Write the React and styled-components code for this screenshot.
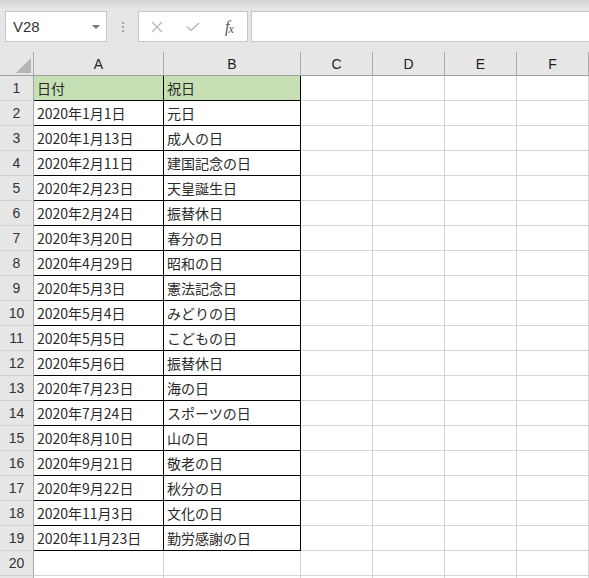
import styled, { createGlobalStyle } from "styled-components";

const GlobalStyle = createGlobalStyle`
  html, body {
    margin: 0;
    padding: 0;
    background: #ffffff;
    overflow: hidden;
  }
`;

const Page = styled.div`
  width: 589px;
  height: 578px;
  overflow: hidden;
  background: #ffffff;
`;

const TopBar = styled.div`
  height: 52px;
  box-sizing: border-box;
  padding: 11px 0 0 5px;
  display: flex;
  align-items: flex-start;
  background: linear-gradient(#d3d3d3 0px, #e6e6e6 9px, #e6e6e6 100%);
`;

const NameBox = styled.div`
  width: 102px;
  height: 31px;
  box-sizing: border-box;
  border: 1px solid #c6c6c6;
  background: #ffffff;
  display: flex;
  align-items: center;
  justify-content: space-between;
  padding: 0 6px 0 7px;
`;

const NameText = styled.span`
  font-family: "Liberation Sans", Arial, sans-serif;
  font-size: 15px;
  color: #333333;
`;

const DropArrow = styled.span`
  width: 0;
  height: 0;
  border-left: 4px solid transparent;
  border-right: 4px solid transparent;
  border-top: 4px solid #777777;
`;

const Grip = styled.div`
  width: 31px;
  height: 31px;
  display: flex;
  flex-direction: column;
  align-items: center;
  justify-content: center;
  gap: 2px;
  padding-left: 1px;
  box-sizing: border-box;

  span {
    width: 2px;
    height: 2px;
    background: #a3a3a3;
  }
`;

const FormulaButtons = styled.div`
  width: 110px;
  height: 31px;
  box-sizing: border-box;
  border: 1px solid #c6c6c6;
  background: #ffffff;
  display: flex;
  align-items: center;
`;

const ToolButton = styled.span`
  width: 36px;
  height: 29px;
  display: flex;
  align-items: center;
  justify-content: center;
`;

const Fx = styled.span`
  font-family: "Liberation Serif", "Times New Roman", serif;
  font-style: italic;
  font-size: 16px;
  color: #5a5a5a;
  letter-spacing: -1px;

  small {
    font-size: 12px;
    position: relative;
    top: 1px;
  }
`;

const FormulaInput = styled.div`
  flex: 1;
  height: 31px;
  margin-left: 3px;
  margin-right: -4px;
  box-sizing: border-box;
  border: 1px solid #c6c6c6;
  background: #ffffff;
`;

const Sheet = styled.div`
  display: grid;
  grid-template-columns: 34px 130px 137px 72px 72px 72px 72px 72px;
  grid-template-rows: 24px;
  grid-auto-rows: 25px;
  font-family: "Noto Sans CJK JP", "Noto Sans", sans-serif;
`;

const Corner = styled.div`
  position: relative;
  background: #e6e6e6;
  border-right: 1px solid #ababab;
  border-bottom: 1px solid #9e9e9e;

  &::after {
    content: "";
    position: absolute;
    right: 2px;
    bottom: 2px;
    width: 0;
    height: 0;
    border-left: 15px solid transparent;
    border-bottom: 15px solid #b5b5b5;
  }
`;

const ColHead = styled.div`
  background: #e6e6e6;
  border-right: 1px solid #ababab;
  border-bottom: 1px solid #9e9e9e;
  display: flex;
  align-items: center;
  justify-content: center;
  font-family: "Liberation Sans", Arial, sans-serif;
  font-size: 14px;
  color: #222222;
`;

const RowHead = styled.div`
  background: #e6e6e6;
  border-right: 1px solid #a6a6a6;
  border-bottom: 1px solid #d2d2d2;
  display: flex;
  align-items: center;
  justify-content: center;
  font-family: "Liberation Sans", Arial, sans-serif;
  font-size: 14px;
  color: #333333;
`;

const Cell = styled.div`
  background: ${(p) => (p.$fill ? "#c6e0b4" : "#ffffff")};
  border-right: 1px solid ${(p) => (p.$boxed ? "#000000" : "#d4d4d4")};
  border-bottom: 1px solid ${(p) => (p.$boxed ? "#000000" : "#d4d4d4")};
  display: flex;
  align-items: center;
  padding-left: 3px;
  font-size: 14px;
  line-height: 1;
  color: #2a2a2a;
  white-space: nowrap;
  overflow: hidden;
`;

// last column (G) sits just past the right edge of the window
const columns = ["A", "B", "C", "D", "E", "F", ""];

const holidays = [
  ["日付", "祝日"],
  ["2020年1月1日", "元日"],
  ["2020年1月13日", "成人の日"],
  ["2020年2月11日", "建国記念の日"],
  ["2020年2月23日", "天皇誕生日"],
  ["2020年2月24日", "振替休日"],
  ["2020年3月20日", "春分の日"],
  ["2020年4月29日", "昭和の日"],
  ["2020年5月3日", "憲法記念日"],
  ["2020年5月4日", "みどりの日"],
  ["2020年5月5日", "こどもの日"],
  ["2020年5月6日", "振替休日"],
  ["2020年7月23日", "海の日"],
  ["2020年7月24日", "スポーツの日"],
  ["2020年8月10日", "山の日"],
  ["2020年9月21日", "敬老の日"],
  ["2020年9月22日", "秋分の日"],
  ["2020年11月3日", "文化の日"],
  ["2020年11月23日", "勤労感謝の日"],
];

// 21 rows: the last one only peeks in at the bottom edge, so it gets no label
const rows = Array.from({ length: 21 }, (_, i) => holidays[i] || ["", ""]);

const App = () => {
  return (
    <>
      <GlobalStyle />
      <Page>
        <TopBar>
          <NameBox>
            <NameText>V28</NameText>
            <DropArrow />
          </NameBox>
          <Grip>
            <span />
            <span />
            <span />
          </Grip>
          <FormulaButtons>
            <ToolButton>
              <svg width="12" height="12" viewBox="0 0 12 12">
                <path d="M1 1 L11 11 M11 1 L1 11" stroke="#b9b9b9" strokeWidth="1.3" fill="none" />
              </svg>
            </ToolButton>
            <ToolButton>
              <svg width="14" height="10" viewBox="0 0 14 10">
                <path d="M1 4.5 L5 8.5 L13 1" stroke="#b9b9b9" strokeWidth="1.6" fill="none" />
              </svg>
            </ToolButton>
            <ToolButton>
              <Fx>
                f<small>x</small>
              </Fx>
            </ToolButton>
          </FormulaButtons>
          <FormulaInput />
        </TopBar>
        <Sheet>
          <Corner />
          {columns.map((c, i) => (
            <ColHead key={i}>{c}</ColHead>
          ))}
          {rows.map((r, i) => {
            const boxed = i < 19;
            return [
              <RowHead key={`h${i}`}>{i < 20 ? i + 1 : ""}</RowHead>,
              <Cell key={`a${i}`} $boxed={boxed} $fill={i === 0}>
                {r[0]}
              </Cell>,
              <Cell key={`b${i}`} $boxed={boxed} $fill={i === 0}>
                {r[1]}
              </Cell>,
              ...columns.slice(2).map((_, j) => <Cell key={`c${j}-${i}`} />),
            ];
          })}
        </Sheet>
      </Page>
    </>
  );
};

export default App;
